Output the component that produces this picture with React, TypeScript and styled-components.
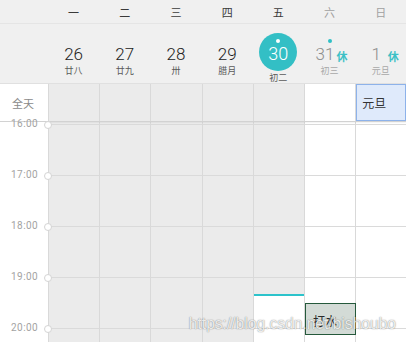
import styled, { createGlobalStyle } from "styled-components";

const COL = 51.2;
const HOUR = 51;
const GRID = `48px repeat(7, ${COL}px)`;

interface Day {
  week: string;
  date: number;
  lunar: string;
  weekend?: boolean;
  today?: boolean;
  dot?: boolean;
  rest?: boolean;
  past?: boolean;
}

const days: Day[] = [
  { week: "一", date: 26, lunar: "廿八", past: true },
  { week: "二", date: 27, lunar: "廿九", past: true },
  { week: "三", date: 28, lunar: "卅", past: true },
  { week: "四", date: 29, lunar: "腊月", past: true },
  { week: "五", date: 30, lunar: "初二", today: true, dot: true },
  { week: "六", date: 31, lunar: "初三", weekend: true, dot: true, rest: true },
  { week: "日", date: 1, lunar: "元旦", weekend: true, rest: true },
];

const hours = ["16:00", "17:00", "18:00", "19:00", "20:00"];

// current time 19:20, measured from the 16:00 line
const NOW_OFFSET = 2 + (3 + 20 / 60) * HOUR;

const GlobalStyle = createGlobalStyle`
  html, body {
    margin: 0;
    padding: 0;
    background: #fff;
  }
  body {
    font-family: Roboto, "Noto Sans CJK SC", sans-serif;
  }
`;

const Screen = styled.div`
  position: relative;
  width: 406px;
  height: 342px;
  overflow: hidden;
  background: #fff;
`;

const Header = styled.div`
  background: #f0f0f0;
`;

const WeekRow = styled.div`
  display: grid;
  grid-template-columns: ${GRID};
  height: 24px;
  box-sizing: border-box;
  border-bottom: 1px solid #e5e5e5;
`;

const WeekLabel = styled.div<{ $weekend?: boolean }>`
  display: flex;
  align-items: center;
  justify-content: center;
  font-family: "Noto Sans CJK SC", sans-serif;
  font-size: 11px;
  color: ${(p) => (p.$weekend ? "#a0a0a0" : "#3a3a3a")};
`;

const DateRow = styled.div`
  display: grid;
  grid-template-columns: ${GRID};
  height: 60px;
  box-sizing: border-box;
  border-bottom: 1px solid #e0e0e0;
`;

const DateCell = styled.div<{ $today?: boolean }>`
  display: flex;
  flex-direction: column;
  align-items: center;
  padding-top: ${(p) => (p.$today ? 9 : 15)}px;
`;

const Dot = styled.span<{ $show?: boolean; $white?: boolean }>`
  width: 4px;
  height: 4px;
  border-radius: 50%;
  background: ${(p) => (p.$white ? "#fff" : "#2fc0c6")};
  visibility: ${(p) => (p.$show ? "visible" : "hidden")};
  margin-bottom: 2px;
`;

const TodayCircle = styled.div`
  width: 38px;
  height: 38px;
  border-radius: 50%;
  background: #33bfc5;
  display: flex;
  flex-direction: column;
  align-items: center;
  padding-top: 6px;
  box-sizing: border-box;
`;

const NumberRow = styled.div`
  position: relative;
  width: 100%;
  display: flex;
  justify-content: center;
`;

const DateNumber = styled.span<{ $weekend?: boolean; $today?: boolean; $shift?: boolean }>`
  font-size: ${(p) => (p.$today ? 18 : 17)}px;
  font-weight: 300;
  line-height: 18px;
  color: ${(p) => (p.$today ? "#fff" : p.$weekend ? "#8e8e8e" : "#222")};
  margin-right: ${(p) => (p.$shift ? 9 : 0)}px;
`;

const RestBadge = styled.span`
  position: absolute;
  left: calc(50% + 7px);
  top: 5px;
  font-family: "Noto Sans CJK SC", sans-serif;
  font-size: 11px;
  line-height: 12px;
  font-weight: 700;
  color: #3cc0c6;
`;

const Lunar = styled.span<{ $weekend?: boolean; $today?: boolean }>`
  font-family: "Noto Sans CJK SC", sans-serif;
  font-size: 9px;
  line-height: 10px;
  margin-top: ${(p) => (p.$today ? 2 : 3)}px;
  color: ${(p) => (p.$weekend ? "#a8a8a8" : "#5a5a5a")};
`;

const AllDayRow = styled.div`
  display: grid;
  grid-template-columns: ${GRID};
  height: 38px;
  box-sizing: border-box;
  border-bottom: 1px solid #d2d2d2;
  box-shadow: 0 1px 1px rgba(0, 0, 0, 0.04);
  position: relative;
  z-index: 1;
`;

const AllDayLabel = styled.div`
  display: flex;
  align-items: center;
  padding-left: 12px;
  background: #fff;
  font-family: "Noto Sans CJK SC", sans-serif;
  font-size: 11px;
  color: #8a8a8a;
`;

const DayCell = styled.div<{ $past?: boolean }>`
  display: flex;
  border-left: 1px solid #d9d9d9;
  background: ${(p) => (p.$past ? "#ebebeb" : "#fff")};
`;

const AllDayEvent = styled.div`
  flex: 1;
  display: flex;
  align-items: center;
  padding-left: 5px;
  border: 1px solid #8db2ea;
  background: #dfeafb;
  font-family: "Noto Sans CJK SC", sans-serif;
  font-size: 12px;
  color: #333;
`;

const Body = styled.div`
  display: grid;
  grid-template-columns: ${GRID};
`;

const TimeColumn = styled.div`
  position: relative;
  z-index: 2;
  padding-top: 2px;
  background: #fff;
`;

const HourMark = styled.div`
  display: flex;
  justify-content: flex-end;
  align-items: flex-start;
  gap: 6px;
  height: ${HOUR}px;
`;

const HourLabel = styled.span`
  margin-top: -6px;
  font-size: 10px;
  line-height: 12px;
  letter-spacing: 0.4px;
  color: #a3a3a3;
`;

const Ring = styled.span`
  width: 8px;
  height: 8px;
  margin-top: -3.5px;
  margin-right: -4px;
  box-sizing: border-box;
  border: 1.5px solid #d4d4d4;
  border-radius: 50%;
  background: #fff;
`;

const DayColumn = styled.div<{ $past?: boolean; $pastUntil?: number }>`
  position: relative;
  padding-top: 2px;
  border-left: 1px solid #d9d9d9;
  background: ${(p) =>
    p.$past
      ? "#ebebeb"
      : p.$pastUntil
        ? `linear-gradient(to bottom, #ebebeb ${p.$pastUntil}px, #fff ${p.$pastUntil}px)`
        : "#fff"};
`;

const HourCell = styled.div`
  height: ${HOUR}px;
  box-sizing: border-box;
  border-top: 1px solid #dadada;
`;

const NowLine = styled.div`
  position: absolute;
  left: 0;
  right: 0;
  height: 2px;
  background: #2cc3cb;
`;

const TimedEvent = styled.div`
  position: absolute;
  left: 0;
  width: 51px;
  height: 32px;
  box-sizing: border-box;
  display: flex;
  align-items: center;
  padding: 4px 0 0 7px;
  border: 1px solid #25593b;
  background: #d3dbd6;
  font-family: "Noto Sans CJK SC", sans-serif;
  font-size: 12px;
  color: #2a2a2a;
  z-index: 1;
`;

const Watermark = styled.div`
  position: absolute;
  right: 10px;
  bottom: 10px;
  font-family: "Liberation Sans", Arial, sans-serif;
  font-size: 15.6px;
  line-height: 16px;
  color: rgba(255, 255, 255, 0.85);
  text-shadow: 0 0 1px rgba(0, 0, 0, 0.45), 0 0 2px rgba(0, 0, 0, 0.15);
  pointer-events: none;
  z-index: 5;
`;

export default function App() {
  return (
    <Screen>
      <GlobalStyle />
      <Header>
        <WeekRow>
          <div />
          {days.map((d) => (
            <WeekLabel key={d.week} $weekend={d.weekend}>
              {d.week}
            </WeekLabel>
          ))}
        </WeekRow>
        <DateRow>
          <div />
          {days.map((d) =>
            d.today ? (
              <DateCell key={d.date} $today>
                <TodayCircle>
                  <Dot $show={d.dot} $white />
                  <DateNumber $today>{d.date}</DateNumber>
                </TodayCircle>
                <Lunar $today>{d.lunar}</Lunar>
              </DateCell>
            ) : (
              <DateCell key={d.date}>
                <Dot $show={d.dot} />
                <NumberRow>
                  <DateNumber $weekend={d.weekend} $shift={d.rest}>
                    {d.date}
                  </DateNumber>
                  {d.rest && <RestBadge>休</RestBadge>}
                </NumberRow>
                <Lunar $weekend={d.weekend}>{d.lunar}</Lunar>
              </DateCell>
            )
          )}
        </DateRow>
      </Header>

      <AllDayRow>
        <AllDayLabel>全天</AllDayLabel>
        {days.map((d) => (
          <DayCell key={d.date} $past={d.past || d.today}>
            {d.date === 1 && <AllDayEvent>元旦</AllDayEvent>}
          </DayCell>
        ))}
      </AllDayRow>

      <Body>
        <TimeColumn>
          {hours.map((h) => (
            <HourMark key={h}>
              <HourLabel>{h}</HourLabel>
              <Ring />
            </HourMark>
          ))}
        </TimeColumn>
        {days.map((d) => (
          <DayColumn
            key={d.date}
            $past={d.past}
            $pastUntil={d.today ? NOW_OFFSET : undefined}
          >
            {hours.map((h) => (
              <HourCell key={h} />
            ))}
            {d.today && <NowLine style={{ top: NOW_OFFSET }} />}
            {d.date === 31 && (
              <TimedEvent style={{ top: 2 + 3.5 * HOUR }}>打水</TimedEvent>
            )}
          </DayColumn>
        ))}
      </Body>

      <Watermark>https://blog.csdn.net/bishoubo</Watermark>
    </Screen>
  );
}
